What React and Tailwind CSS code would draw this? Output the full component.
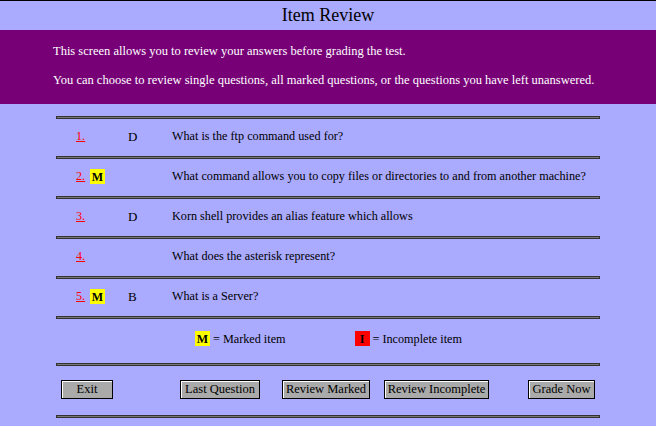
import React from "react";

const rows = [
  { n: "1.", m: false, a: "D", q: "What is the ftp command used for?" },
  { n: "2.", m: true, a: "", q: "What command allows you to copy files or directories to and from another machine?" },
  { n: "3.", m: false, a: "D", q: "Korn shell provides an alias feature which allows" },
  { n: "4.", m: false, a: "", q: "What does the asterisk represent?" },
  { n: "5.", m: true, a: "B", q: "What is a Server?" },
];

function Hr() {
  return <div className="h-[3px] w-full border border-[#333] bg-[#777]" />;
}

function Badge({ letter, color }) {
  return (
    <span
      className={`inline-flex h-[15px] w-[15px] items-center justify-center text-[12px] font-bold leading-none text-black ${color}`}
    >
      {letter}
    </span>
  );
}

function Btn({ children, w }) {
  return (
    <button
      className={`flex h-[19px] items-center justify-center whitespace-nowrap border border-black bg-[#aaaaaa] text-[12.5px] leading-none text-black shadow-[inset_1px_1px_0_#fff] ${w}`}
    >
      {children}
    </button>
  );
}

export default function App() {
  return (
    <div
      className="h-[426px] w-[656px] overflow-hidden border-t border-black bg-[#aaaaff] text-black"
      style={{ fontFamily: '"Liberation Serif", "Times New Roman", serif' }}
    >
      <div className="flex h-[29px] items-center justify-center text-[18px]">Item Review</div>
      <div className="flex h-[74px] flex-col gap-[10px] bg-[#770077] px-[53px] pt-[12px] text-[12.5px] text-white">
        <div className="whitespace-nowrap">This screen allows you to review your answers before grading the test.</div>
        <div className="whitespace-nowrap">You can choose to review single questions, all marked questions, or the questions you have left unanswered.</div>
      </div>
      <div className="ml-[56px] mt-[12px] w-[544px]">
        <Hr />
        {rows.map((r) => (
          <React.Fragment key={r.n}>
            <div className="flex h-[37px] items-center whitespace-nowrap pb-[2px] text-[12.2px]">
              <span className="ml-[20px] w-[14px] text-[#ff0000] underline">{r.n}</span>
              <span className="flex w-[38px]">{r.m && <Badge letter="M" color="bg-[#ffff00]" />}</span>
              <span className="w-[44px] text-[13px]">{r.a}</span>
              <span>{r.q}</span>
            </div>
            <Hr />
          </React.Fragment>
        ))}
        <div className="flex h-[44px] items-center whitespace-nowrap pb-[4px] text-[12.2px]">
          <span className="ml-[139px] flex items-center gap-[3px]">
            <Badge letter="M" color="bg-[#ffff00]" />= Marked item
          </span>
          <span className="ml-[69px] flex items-center gap-[3px]">
            <Badge letter="I" color="bg-[#ff0000]" />= Incomplete item
          </span>
        </div>
        <Hr />
        <div className="flex h-[49px] items-center pb-[2px]">
          <div className="ml-[5px]"><Btn w="w-[52px]">Exit</Btn></div>
          <div className="ml-[67px]"><Btn w="w-[80px]">Last Question</Btn></div>
          <div className="ml-[22px]"><Btn w="w-[88px]">Review Marked</Btn></div>
          <div className="ml-[14px]"><Btn w="w-[105px]">Review Incomplete</Btn></div>
          <div className="ml-[39px]"><Btn w="w-[67px]">Grade Now</Btn></div>
        </div>
        <Hr />
      </div>
    </div>
  );
}
